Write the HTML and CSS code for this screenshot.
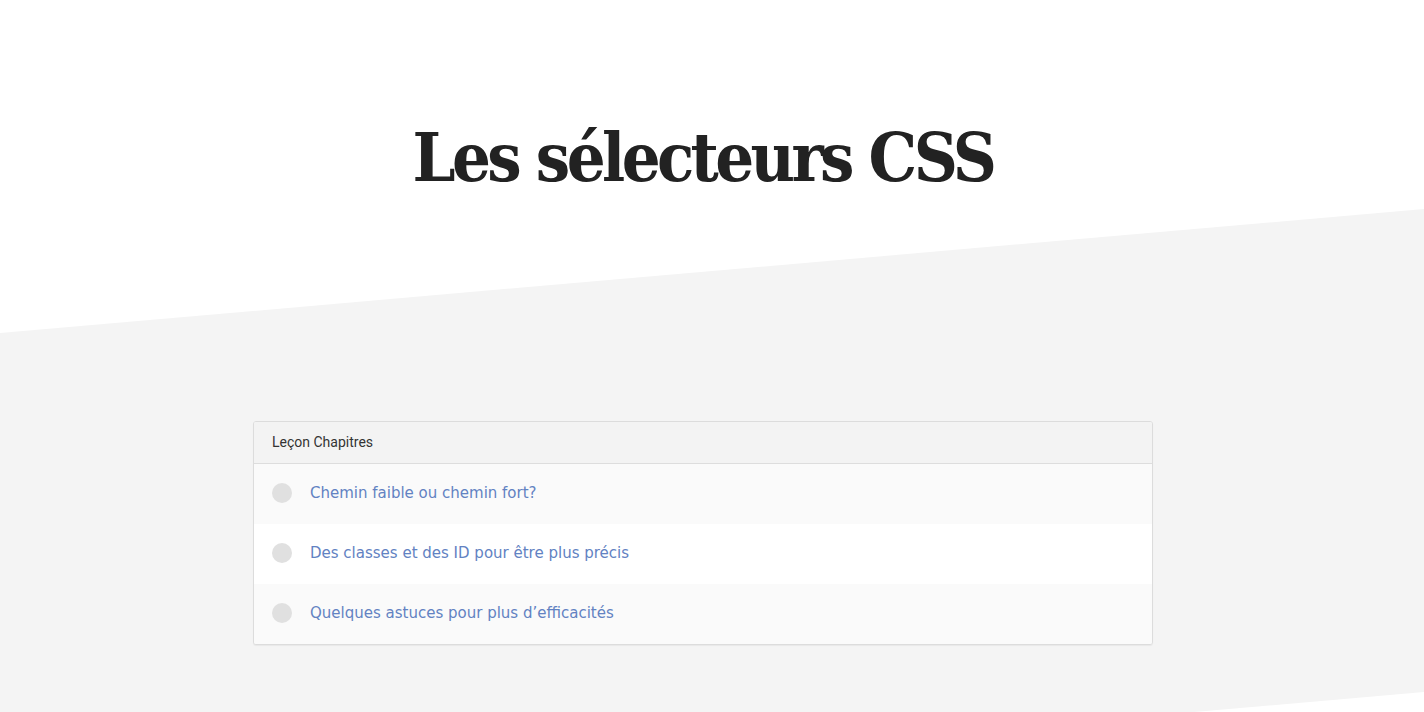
FILE: index.html
```html
<!DOCTYPE html>
<html lang="fr">
<head>
<meta charset="utf-8">
<title>Les sélecteurs CSS</title>
<link rel="stylesheet" href="styles.css">
</head>
<body>
<header class="hero">
  <h1 class="hero-title">Les sélecteurs CSS</h1>
</header>
<section class="lessons">
  <div class="card">
    <div class="card-header">Leçon Chapitres</div>
    <ul class="chapter-list">
      <li class="chapter"><span class="status"></span><a class="chapter-link" href="#">Chemin faible ou chemin fort?</a></li>
      <li class="chapter"><span class="status"></span><a class="chapter-link" href="#">Des classes et des ID pour être plus précis</a></li>
      <li class="chapter"><span class="status"></span><a class="chapter-link" href="#">Quelques astuces pour plus d’efficacités</a></li>
    </ul>
  </div>
</section>
</body>
</html>
```

FILE: styles.css
```css
html, body {
  margin: 0;
  padding: 0;
  background: #ffffff;
  overflow: hidden;
}

body {
  font-family: "DejaVu Sans", Verdana, sans-serif;
}

.hero {
  height: 209px;
  display: flex;
  justify-content: center;
  padding-right: 18px;
}

.hero-title {
  margin: 112px 0 0;
  font-family: "DejaVu Serif Condensed", "DejaVu Serif", serif;
  font-weight: bold;
  font-size: 68px;
  line-height: 90px;
  color: #222222;
  letter-spacing: -3.6px;
}

.lessons {
  background: #f4f4f4;
  height: 607px;
  clip-path: polygon(0 124px, 100% 0, 100% 483px, 0 607px);
  padding: 212px 18px 0 0;
  box-sizing: border-box;
  display: flex;
  justify-content: center;
  align-items: flex-start;
}

.card {
  width: 898px;
  background: #ffffff;
  border: 1px solid #dcdcdc;
  border-radius: 3px;
  box-shadow: 0 1px 1px rgba(0,0,0,0.05);
  overflow: hidden;
}

.card-header {
  height: 42px;
  box-sizing: border-box;
  padding: 0 18px 1px;
  display: flex;
  align-items: center;
  background: #f3f3f3;
  border-bottom: 1px solid #dddddd;
  font-family: "Roboto", "Liberation Sans", sans-serif;
  font-size: 14px;
  color: #333333;
}

.chapter-list {
  list-style: none;
  margin: 0;
  padding: 0;
}

.chapter {
  height: 60px;
  box-sizing: border-box;
  padding: 0 18px 2px;
  display: flex;
  align-items: center;
  gap: 18px;
  background: #fafafa;
}

.chapter:nth-child(2) {
  background: #ffffff;
}

.status {
  width: 20px;
  height: 20px;
  border-radius: 50%;
  background: #e0e0e0;
  flex: none;
}

.chapter-link {
  font-size: 15px;
  color: #6282c2;
  text-decoration: none;
}
```
